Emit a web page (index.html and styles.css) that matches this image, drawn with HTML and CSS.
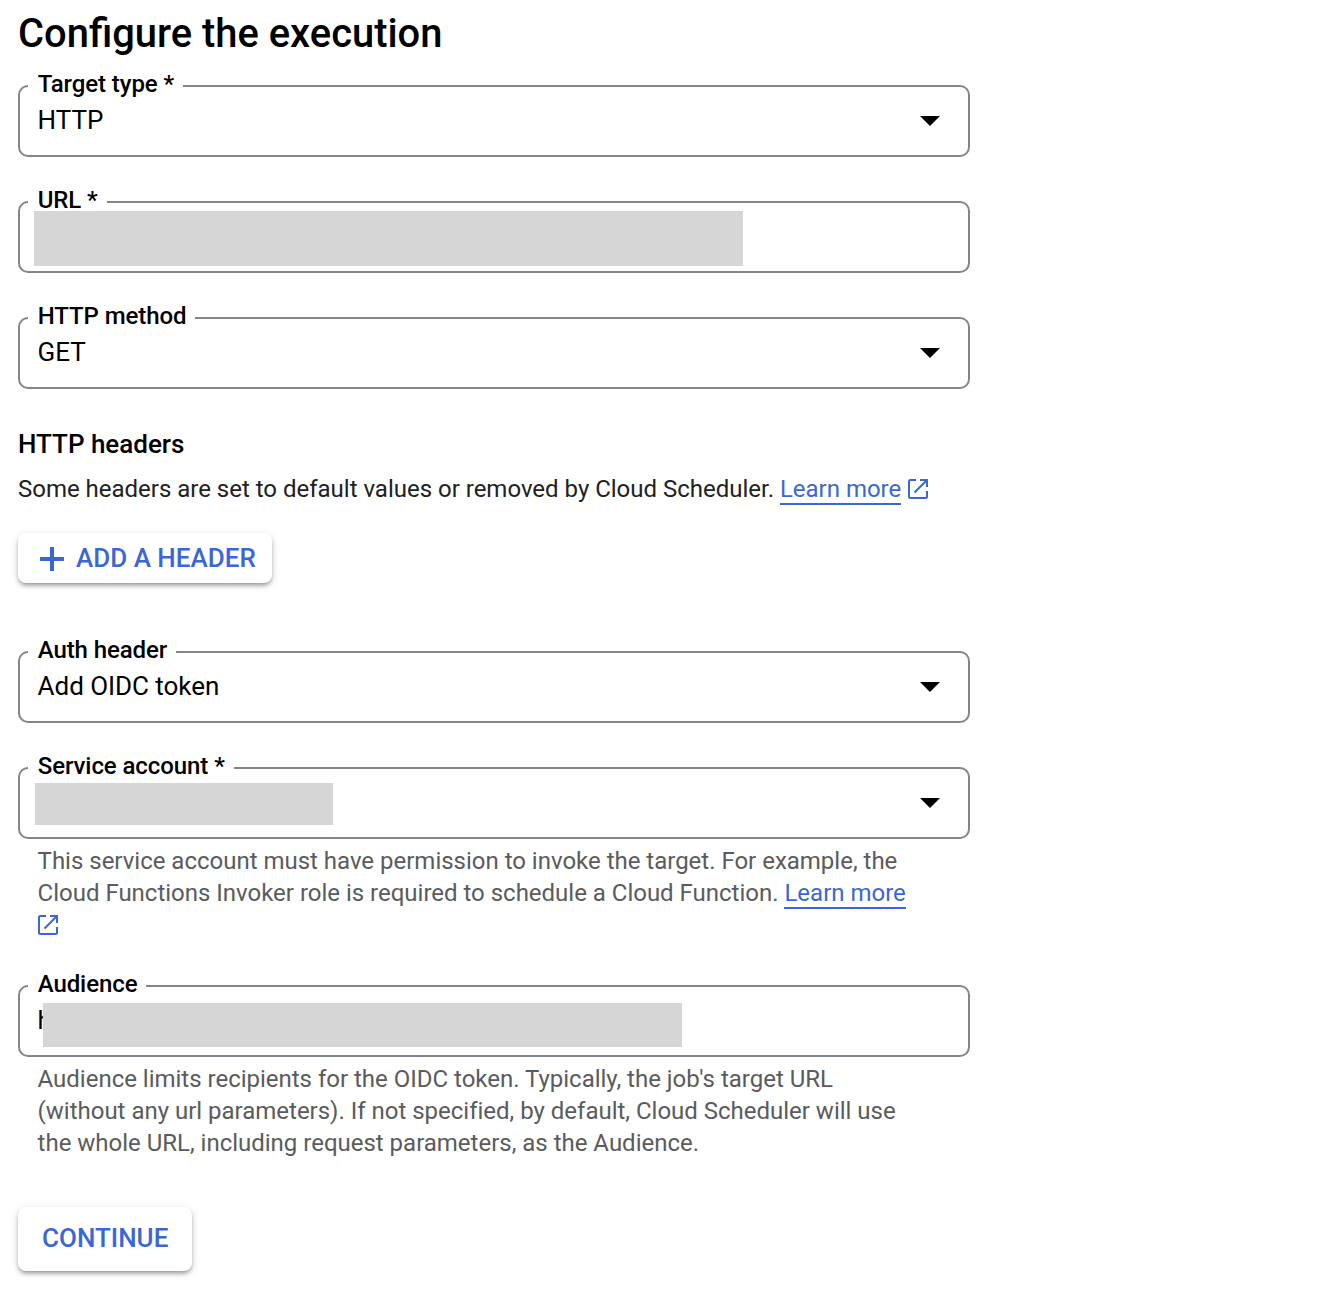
FILE: index.html
```
<!DOCTYPE html>
<html lang="en">
<head>
<meta charset="utf-8">
<title>Configure the execution</title>
<link rel="stylesheet" href="styles.css">
</head>
<body>
<svg class="sprite" aria-hidden="true">
  <symbol id="external" viewBox="0 0 20 20">
    <path d="M8 1H2.500Q1 1 1 2.500V17.500Q1 19 2.500 19H17.500Q19 19 19 17.500V12M12 1H19V8M19 1L6.500 13.500" fill="none" stroke="currentColor" stroke-width="2"/>
  </symbol>
</svg>
<main class="form">
  <h1 class="title">Configure the execution</h1>

  <fieldset class="field">
    <legend class="label">Target type *</legend>
    <div class="value"><span class="text">HTTP</span><i class="arrow"></i></div>
  </fieldset>

  <fieldset class="field">
    <legend class="label">URL *</legend>
    <div class="value"><i class="mask mask-url"></i></div>
  </fieldset>

  <fieldset class="field">
    <legend class="label">HTTP method</legend>
    <div class="value"><span class="text">GET</span><i class="arrow"></i></div>
  </fieldset>

  <h2 class="subtitle">HTTP headers</h2>
  <p class="intro">Some headers are set to default values or removed by Cloud Scheduler. <a class="link" href="#">Learn more</a> <svg class="external"><use href="#external"/></svg></p>
  <button class="button add" type="button"><svg class="plus" viewBox="0 0 24 24"><path d="M12 0V24M0 12H24" stroke="currentColor" stroke-width="4"/></svg>ADD A HEADER</button>

  <fieldset class="field auth">
    <legend class="label">Auth header</legend>
    <div class="value"><span class="text">Add OIDC token</span><i class="arrow"></i></div>
  </fieldset>

  <fieldset class="field">
    <legend class="label">Service account *</legend>
    <div class="value"><i class="mask mask-account"></i><i class="arrow"></i></div>
  </fieldset>
  <p class="hint">This service account must have permission to invoke the target. For example, the<br>Cloud Functions Invoker role is required to schedule a Cloud Function. <a class="link" href="#">Learn more</a><br><svg class="external"><use href="#external"/></svg></p>

  <fieldset class="field audience">
    <legend class="label">Audience</legend>
    <div class="value"><span class="text">h</span><i class="mask mask-audience"></i></div>
  </fieldset>
  <p class="hint">Audience limits recipients for the OIDC token. Typically, the job's target URL<br>(without any url parameters). If not specified, by default, Cloud Scheduler will use<br>the whole URL, including request parameters, as the Audience.</p>

  <button class="button continue" type="button">CONTINUE</button>
</main>
</body>
</html>
```
FILE: styles.css
```
* { box-sizing: border-box; }
body { margin: 0; background: #fff; color: #000; font-family: Roboto, sans-serif; }
.sprite { display: none; }
.form { width: 970px; padding: 8px 0 21px 18px; }
.title { margin: 0; font-size: 39.900px; line-height: 52px; font-weight: 500; }
.field { min-width: 0; height: 84px; margin: 13px 0 0; padding: 0 0 0 8px; border: 2px solid #80868b; border-radius: 10px; }
.field + .field { margin-top: 32px; }
.label { height: 26px; padding: 0 9px 0 9.700px; font-size: 24px; line-height: 23px; font-weight: 500; letter-spacing: -.08px; }
.value { position: relative; display: flex; align-items: center; height: 44px; padding: 0 28px 0 9.600px; font-size: 26px; }
.text { padding-bottom: 2px; line-height: 42px; letter-spacing: -.04px; }
.arrow { margin-left: auto; border: solid transparent; border-width: 10px 10px 0; border-top-color: #000; }
.mask { position: absolute; background: #d6d6d6; }
.mask-url { left: 6px; top: -4px; width: 709px; height: 55px; }
.mask-account { left: 7px; top: 2px; width: 298px; height: 42px; }
.mask-audience { left: 15px; top: 4px; width: 639px; height: 44px; }
.subtitle { margin: 39px 0 0; font-size: 26px; line-height: 32px; font-weight: 500; letter-spacing: -.02px; }
.intro { margin: 13px 0 0; color: #202124; font-size: 24px; line-height: 32px; letter-spacing: -.01px; white-space: nowrap; }
.link { color: #3c67d1; text-decoration: none; border-bottom: 2px solid; }
.external { width: 20px; height: 20px; color: #3c67d1; vertical-align: -2px; }
.intro .external { margin-left: 1px; }
.button { display: flex; align-items: center; border: 0; border-radius: 8px; background: #fff; color: #3c67d1; font: 500 26px/32px Roboto, sans-serif; box-shadow: 0 3px 4px -1px rgba(0,0,0,.36), 0 2px 8px rgba(0,0,0,.14); }
.add { width: 254px; height: 50px; margin-top: 28px; padding: 0 0 0 22px; gap: 12px; }
.plus { width: 24px; height: 24px; margin-top: 2px; }
.auth { margin-top: 56px; }
.hint { margin: 6px 0 0 19.600px; color: #5a5b5c; font-size: 24px; line-height: 32px; letter-spacing: -.01px; white-space: nowrap; }
.audience { margin-top: 32px; }
.continue { width: 174px; height: 64px; margin-top: 48px; padding: 0 0 2px 24px; }
```
